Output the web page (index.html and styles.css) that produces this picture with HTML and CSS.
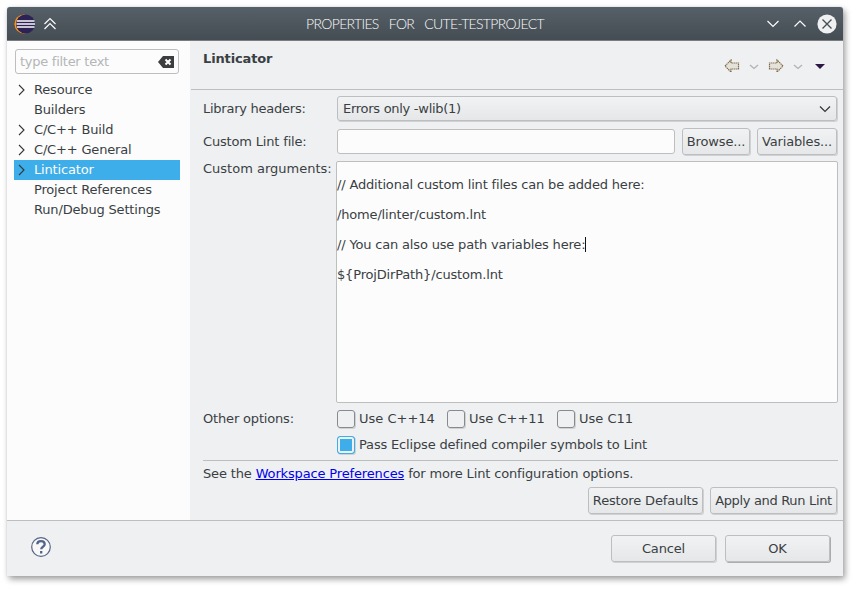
FILE: index.html
```
<!DOCTYPE html>
<html lang="en">
<head>
<meta charset="utf-8">
<title>Properties for cute-testproject</title>
<link rel="stylesheet" href="styles.css">
</head>
<body>
<div class="window">
  <header class="titlebar">
    <svg class="logo" width="22" height="20" viewBox="0 0 22 20"><circle cx="10" cy="10" r="9.6" fill="#f7941e"/><circle cx="11.5" cy="10" r="9.5" fill="#2c2255"/><path d="M3 7h17.5M2.5 10h18.5M3 13h17.5" stroke="#fff" stroke-width="1.5"/></svg>
    <svg class="shade" width="14" height="14" viewBox="0 0 14 14"><path d="M1.500 7 7 1.500 12.500 7M1.500 12 7 6.500 12.500 12"/></svg>
    <h1 class="title">Properties for cute-testproject</h1>
    <svg class="control" width="14" height="10" viewBox="0 0 14 10"><path d="M1.500 2 7 7.500 12.500 2"/></svg>
    <svg class="control" width="14" height="10" viewBox="0 0 14 10"><path d="M1.500 7.500 7 2 12.500 7.500"/></svg>
    <svg class="close" width="20" height="20" viewBox="0 0 20 20"><circle cx="10" cy="10" r="9.600"/><path d="m5.500 5.500 9 9M14.500 5.500l-9 9"/></svg>
  </header>
  <div class="main">
    <nav class="sidebar">
      <div class="filter"><span>type filter text</span>
        <svg width="16" height="12" viewBox="0 0 16 12"><path d="M5 0h11v12H5L0 6z" fill="#3b3d3f"/><path d="m7.500 3.500 5 5m0-5-5 5" stroke="#fff" stroke-width="2"/></svg>
      </div>
      <ul class="tree">
        <li><svg viewBox="0 0 8 12"><path d="m1 1 5 5-5 5"/></svg><span>Resource</span></li>
        <li><span class="leaf">Builders</span></li>
        <li><svg viewBox="0 0 8 12"><path d="m1 1 5 5-5 5"/></svg><span>C/C++ Build</span></li>
        <li><svg viewBox="0 0 8 12"><path d="m1 1 5 5-5 5"/></svg><span>C/C++ General</span></li>
        <li class="selected"><svg viewBox="0 0 8 12"><path d="m1 1 5 5-5 5"/></svg><span>Linticator</span></li>
        <li><span class="leaf">Project References</span></li>
        <li><span class="leaf">Run/Debug Settings</span></li>
      </ul>
    </nav>
    <section class="page">
      <div class="page-head">
        <h2>Linticator</h2>
        <div class="history">
          <svg class="arrow" width="16" height="14" viewBox="0 0 16 14"><path d="M1 7 7 1v3h7.500v6H7v3z"/></svg>
          <svg class="drop" width="10" height="6" viewBox="0 0 10 6"><path d="m1 1 4 3.500L9 1"/></svg>
          <svg class="arrow" width="16" height="14" viewBox="0 0 16 14"><path d="m15 7-6-6v3H1.500v6H9v3z"/></svg>
          <svg class="drop" width="10" height="6" viewBox="0 0 10 6"><path d="m1 1 4 3.500L9 1"/></svg>
          <svg class="menu" width="10" height="5" viewBox="0 0 10 5"><path d="M0 0h10L5 5z" fill="#2d1745"/></svg>
        </div>
      </div>
      <div class="form">
        <div class="row library"><label>Library headers:</label>
          <div class="combo"><span>Errors only -wlib(1)</span><svg width="12" height="8" viewBox="0 0 12 8"><path d="m1 1.500 5 5 5-5"/></svg></div></div>
        <div class="row file"><label>Custom Lint file:</label><div class="input"></div><button class="browse">Browse...</button><button class="variables">Variables...</button></div>
        <div class="row args"><label>Custom arguments:</label>
          <div class="textarea"><p>// Additional custom lint files can be added here:</p><p>/home/linter/custom.lnt</p><p>// You can also use path variables here:<i class="caret"></i></p><p>${ProjDirPath}/custom.lnt</p></div></div>
        <div class="row options"><label>Other options:</label><span class="check"><i></i>Use C++14</span><span class="check"><i></i>Use C++11</span><span class="check"><i></i>Use C11</span></div>
        <div class="row symbols"><span class="check checked"><i></i>Pass Eclipse defined compiler symbols to Lint</span></div>
        <p class="hint">See the <a>Workspace Preferences</a> for more Lint configuration options.</p>
        <div class="actions"><button class="restore">Restore Defaults</button><button class="apply">Apply and Run Lint</button></div>
      </div>
    </section>
  </div>
  <footer class="footer">
    <svg class="help" width="20" height="20" viewBox="0 0 20 20"><circle cx="10" cy="10" r="9.300"/><path d="M6.300 7.300C6.300 3 13.700 3 13.700 7.300c0 2.600-3.500 2.400-3.500 5M10.200 14v2.500"/></svg>
    <button>Cancel</button><button class="ok">OK</button>
  </footer>
</div>
</body>
</html>
```
FILE: styles.css
```
* { box-sizing: border-box; }
html, body { margin: 0; width: 856px; height: 589px; overflow: hidden; }
body {
  padding: 7px;
  background: #fff;
  color: #3a3f44;
  font: 13px/20px "DejaVu Sans", sans-serif;
  letter-spacing: -.17px;
}
h1, h2, p, ul { margin: 0; padding: 0; }
svg { display: block; fill: none; flex: none; }
.window {
  display: flex;
  flex-direction: column;
  width: 836px;
  height: 569px;
  background: #eff0f1;
  border-radius: 3px 3px 0 0;
  box-shadow: 0 0 1px #aaa, 2px 3px 6px rgba(0,0,0,.4);
}
.titlebar {
  display: flex;
  align-items: center;
  height: 34px;
  padding: 0 7px;
  background: linear-gradient(#566068, #454d53);
  border-bottom: 1px solid #7a7d7e;
  border-radius: 3px 3px 0 0;
}
.titlebar path { stroke: #fcfcfc; stroke-width: 1.2; }
.titlebar .logo path { stroke-width: 1.6; }
.shade { margin-left: 7px; }
.title {
  flex: 1;
  padding-left: 27px;
  text-align: center;
  color: #fcfcfc;
  font: 300 14px/20px Lato, sans-serif;
  letter-spacing: -.67px;
  word-spacing: 7px;
  text-transform: uppercase;
}
.control { margin-right: 13px; }
.control + .close { margin-left: -3px; }
.close circle { fill: #eff0f1; }
.titlebar .close path { stroke: #475057; stroke-width: 1.4; }
.titlebar { padding-right: 6px; }
.main { display: flex; height: 479px; }
.sidebar { width: 183px; padding: 8px 10px 0 7px; background: #fcfcfc; }
.filter {
  display: flex;
  align-items: center;
  justify-content: space-between;
  width: 164px;
  height: 25px;
  margin-left: 1px;
  padding: 0 4px;
  border: 1px solid #bcbebf;
  border-radius: 3px;
  color: #b4b6b7;
  letter-spacing: -.27px;
}
.tree { margin-top: 6px; list-style: none; }
.tree li { display: flex; align-items: center; height: 20px; padding-left: 4px; }
.tree svg { width: 8px; height: 12px; margin-right: 8px; }
.tree path { stroke: #31363b; stroke-width: 1.1; }
.tree .leaf { margin-left: 16px; }
.tree .selected { background: #3daee9; color: #fcfcfc; }
.page { flex: 1; }
.page-head {
  display: flex;
  justify-content: space-between;
  height: 49px;
  margin-left: 1px;
  padding: 8px 18px 0 12px;
  border-bottom: 1px solid #bcbebf;
}
h2 { font: bold 13px/20px "DejaVu Sans", sans-serif; letter-spacing: -.13px; }
.history { display: flex; align-items: center; height: 34px; }
.arrow path { fill: #e5e2da; stroke: #806e50; stroke-width: 1.2; stroke-dasharray: 1.4 .6; }
.drop { margin: 1px 9px 0; }
.drop path { stroke: #b0b2b3; stroke-width: 1.3; }
.menu { margin-left: 3px; }
.form { padding: 6px 5px 0 13px; }
.row { display: flex; width: 635px; }
label { width: 134px; white-space: nowrap; }
.library label { letter-spacing: -.25px; }
.combo, button {
  background: linear-gradient(#f1f2f3, #e6e7e8);
  border: 1px solid #bcbebf;
  border-radius: 3px;
  box-shadow: 1px 1px 0 #d0d1d2;
}
.combo {
  display: flex;
  align-items: center;
  justify-content: space-between;
  width: 500px;
  height: 25px;
  padding: 0 5px;
  letter-spacing: -.28px;
}
.combo path { stroke: #31363b; stroke-width: 1.2; }
.library, .file { align-items: center; }
.file { height: 27px; margin-top: 7px; }
.input { width: 338px; height: 25px; background: #fcfcfc; border: 1px solid #bcbebf; border-radius: 3px; }
button {
  height: 27px;
  padding: 0;
  color: inherit;
  font: inherit;
  letter-spacing: -.15px;
  white-space: nowrap;
}
.browse { width: 68px; margin: 0 7px; }
.variables { width: 80px; }
.args { margin-top: 6px; }
.args label { width: 133px; margin-top: -2px; letter-spacing: 0; }
.textarea {
  width: 502px;
  height: 242px;
  padding-top: 8px;
  background: #fcfcfc;
  border: 1px solid #bcbebf;
  border-radius: 2px;
}
.textarea p { height: 30px; line-height: 30px; }
.caret { display: inline-block; width: 1px; height: 15px; background: #111; vertical-align: -3px; }
.options { margin-top: 6px; letter-spacing: 0; }
.options label { letter-spacing: -.17px; }
.check { display: flex; align-items: center; width: 110px; height: 20px; white-space: nowrap; }
.check i {
  flex: none;
  width: 18px;
  height: 18px;
  margin-right: 4px;
  border: 1px solid #888b8d;
  border-radius: 3px;
  box-shadow: 1px 1px 0 #d0d1d2;
}
.checked i { border-color: #3daee9; background: #3daee9; box-shadow: inset 0 0 0 2px #eff0f1, 1px 1px 0 #d0d1d2; }
.symbols { margin-top: 6px; padding-left: 134px; }
.hint { width: 635px; margin-top: 5px; padding-top: 3px; border-top: 1px solid #bcbebf; letter-spacing: -.15px; }
.hint a { color: #0000ee; text-decoration: underline; }
.actions { display: flex; justify-content: flex-end; gap: 7px; width: 634px; margin-top: 3px; }
.restore { width: 115px; }
.apply { width: 127px; letter-spacing: -.33px; }
.footer {
  display: flex;
  align-items: center;
  gap: 9px;
  height: 56px;
  padding: 0 13px 0 24px;
  border-top: 1px solid #bcbebf;
}
.help { margin-right: auto; margin-top: -3px; }
.help circle { fill: #f8f8f9; stroke: #576587; stroke-width: 1.2; }
.help path { stroke: #53638b; stroke-width: 2.300; }
.footer button { width: 105px; }
.footer .ok { box-shadow: 1px 1px 0 #aaacad; }
```
